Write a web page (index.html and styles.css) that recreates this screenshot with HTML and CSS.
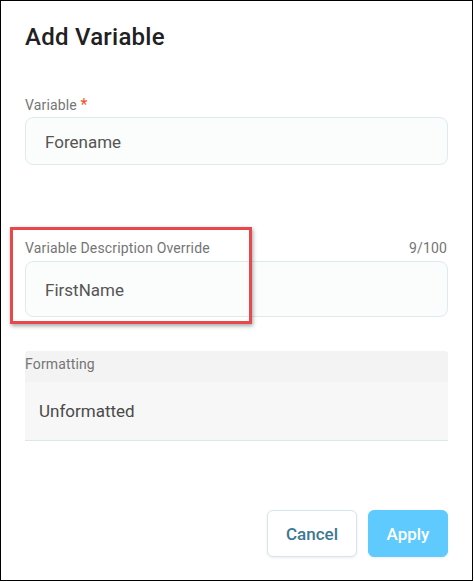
FILE: index.html
```html
<!DOCTYPE html>
<html lang="en">
<head>
<meta charset="utf-8">
<title>Add Variable</title>
<link rel="stylesheet" href="styles.css">
</head>
<body>
<div class="dialog">
  <h1 class="title">Add Variable</h1>

  <div class="field field-variable">
    <div class="label-row"><span class="label">Variable <span class="req">*</span></span></div>
    <div class="input input-short">Forename</div>
  </div>

  <div class="field field-desc">
    <div class="label-row"><span class="label">Variable Description Override</span><span class="counter">9/100</span></div>
    <div class="input input-tall">FirstName</div>
  </div>

  <div class="select">
    <div class="select-label">Formatting</div>
    <div class="select-value">Unformatted</div>
  </div>

  <div class="actions">
    <button class="btn btn-cancel">Cancel</button>
    <button class="btn btn-apply">Apply</button>
  </div>

  <div class="highlight"></div>
</div>
</body>
</html>
```

FILE: styles.css
```css
* { box-sizing: border-box; }

html, body {
  margin: 0;
  background: #ffffff;
}

body {
  font-family: Roboto, "Liberation Sans", sans-serif;
}

.dialog {
  position: relative;
  width: 473px;
  height: 581px;
  border: 1px solid #000000;
  padding: 20px 24px 0 24px;
  background: #ffffff;
  display: flex;
  flex-direction: column;
}

.title {
  margin: 0;
  font-size: 24px;
  line-height: 32px;
  font-weight: 500;
  letter-spacing: 0.25px;
  color: #212121;
}

.field-variable { margin-top: 42px; }
.field-desc { margin-top: 73px; }

.label-row {
  display: flex;
  justify-content: space-between;
  align-items: baseline;
  font-size: 14px;
  line-height: 20px;
  letter-spacing: 0.15px;
  color: #757575;
}

.req { color: #f4511e; font-size: 16px; }

.counter { color: #757575; padding-right: 1px; }

.input {
  display: flex;
  align-items: center;
  padding: 1px 0 0 19px;
  border: 1px solid #dcecee;
  border-radius: 8px;
  background: #fbfcfc;
  font-size: 17px;
  color: #555555;
}

.field-variable .input { margin-top: 2px; height: 48px; }
.field-desc .input { margin-top: 3px; height: 56px; }

.select {
  margin-top: 34px;
  border-radius: 4px 4px 0 0;
  border-bottom: 1px solid #d6eaec;
  background: #f7f7f7;
  overflow: hidden;
}

.select-label {
  height: 31px;
  padding-top: 3px;
  background: #f3f3f3;
  font-size: 14px;
  line-height: 20px;
  letter-spacing: 0.15px;
  color: #757575;
}

.select-value {
  height: 58px;
  display: flex;
  align-items: center;
  padding: 0 0 0 14px;
  font-size: 17px;
  color: #4a4a4a;
}

.actions {
  margin-top: 69px;
  display: flex;
  justify-content: flex-end;
  gap: 11px;
}

.btn {
  height: 47px;
  border-radius: 6px;
  font-family: Roboto, "Liberation Sans", sans-serif;
  font-size: 17px;
  font-weight: 500;
  cursor: pointer;
}

.btn-cancel {
  width: 90px;
  background: #ffffff;
  border: 1px solid #d3e8eb;
  color: #3b7893;
  box-shadow: 0 1px 3px rgba(0, 0, 0, 0.08);
}

.btn-apply {
  width: 80px;
  background: #5ecafd;
  border: 1px solid #5ecafd;
  color: #ffffff;
  box-shadow: 0 1px 3px rgba(0, 0, 0, 0.08);
}

.highlight {
  position: absolute;
  left: 9px;
  top: 226px;
  width: 242px;
  height: 97px;
  border: 3px solid #e8474b;
  box-shadow: 1px 2px 4px rgba(0, 0, 0, 0.35);
  pointer-events: none;
}
```
